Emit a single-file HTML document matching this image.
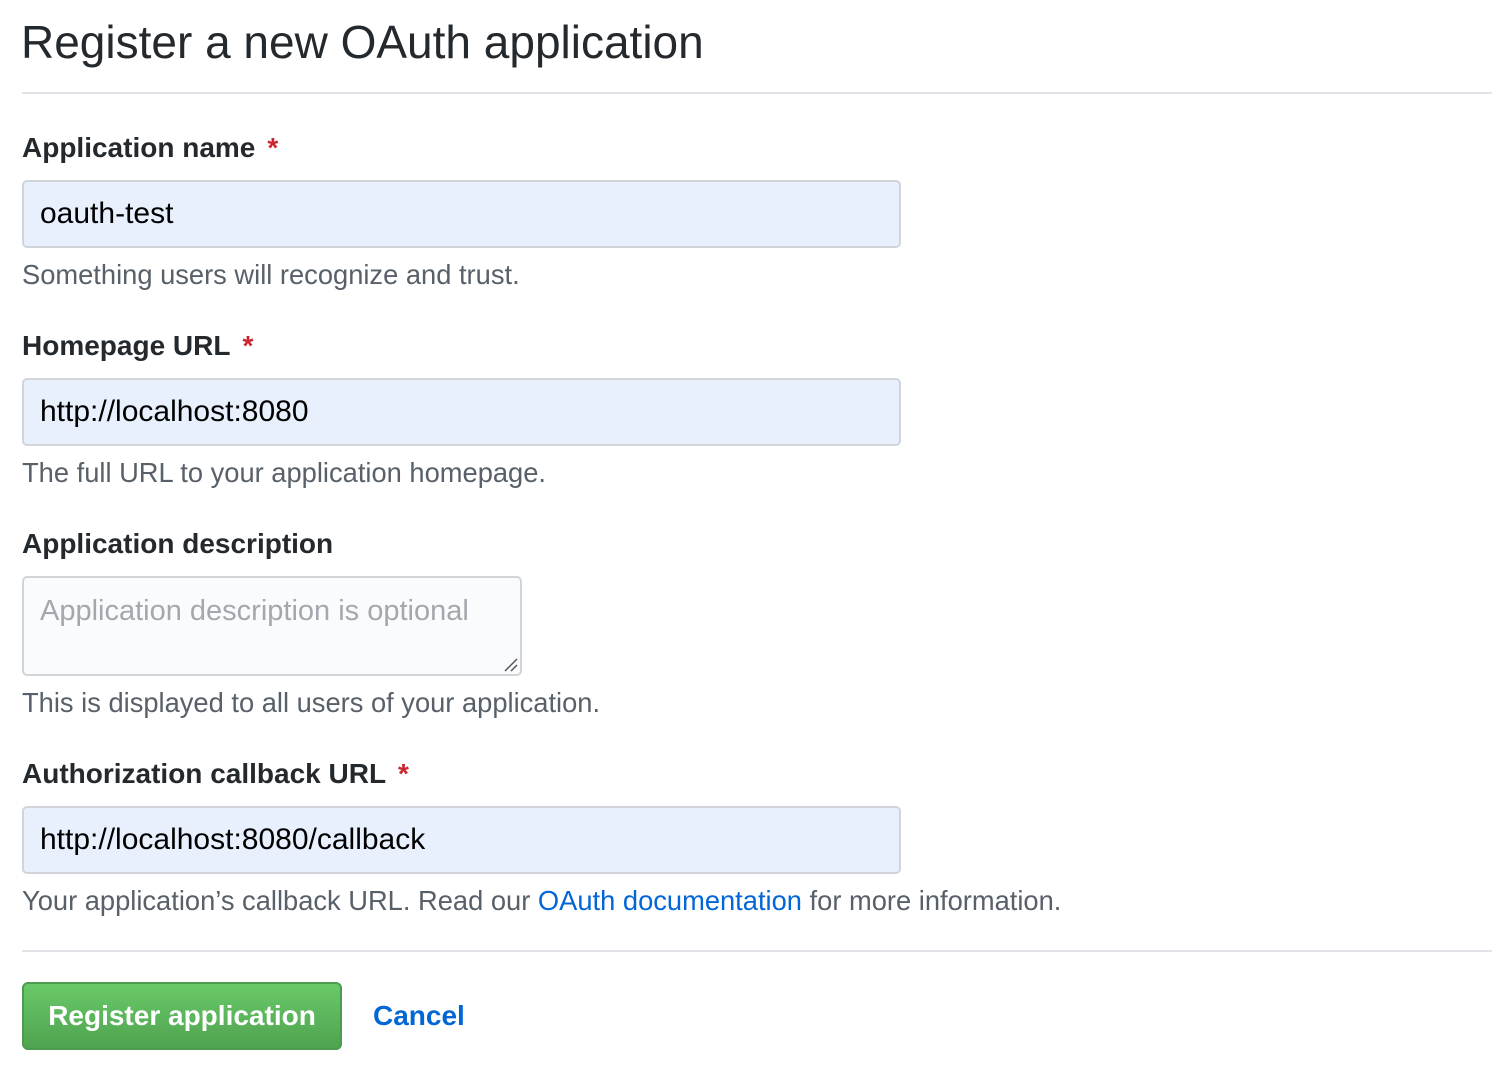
<!DOCTYPE html>
<html><head><meta charset="utf-8"><style>
body{margin:0;width:1512px;height:1068px;background:#fff;font-family:"Liberation Sans",Helvetica,Arial,sans-serif;color:#24292e;position:relative;overflow:hidden}
.a{position:absolute;white-space:nowrap}
.t{left:21px;top:14px;font-size:46px;line-height:56px}
.hr{left:22px;width:1470px;height:2px;background:#e1e4e8}
.l{left:22px;font-size:28px;font-weight:bold;line-height:34px}
.l b{color:#cb2431;margin-left:12px}
.i{left:22px;height:64px;border:2px solid #d1d5da;border-radius:5px;background:#e8f0fe;box-sizing:content-box;font-size:30px;line-height:64px;padding-left:16px;width:859px;color:#000}
.h{left:22px;font-size:27.3px;line-height:32px;color:#586069}
.h span{color:#0366d6}
</style></head><body>
<div class="a t">Register a new OAuth application</div>
<div class="a hr" style="top:92px"></div>
<div class="a l" style="top:131px">Application name<b>*</b></div>
<div class="a i" style="top:180px">oauth-test</div>
<div class="a h" style="top:259px">Something users will recognize and trust.</div>
<div class="a l" style="top:329px">Homepage URL<b>*</b></div>
<div class="a i" style="top:378px">http://localhost:8080</div>
<div class="a h" style="top:457px">The full URL to your application homepage.</div>
<div class="a l" style="top:527px">Application description</div>
<div class="a" style="left:22px;top:576px;height:96px;border:2px solid #d1d5da;border-radius:5px;background:#fafbfc;font-size:29px;color:#a3a8ae;line-height:66px;padding-left:16px;width:480px">Application description is optional
<svg style="position:absolute;right:2px;bottom:2px" width="14" height="14" viewBox="0 0 14 14"><path d="M13 1L1 13M13 7L7 13" stroke="#555" stroke-width="1.5"/></svg></div>
<div class="a h" style="top:687px">This is displayed to all users of your application.</div>
<div class="a l" style="top:757px">Authorization callback URL<b>*</b></div>
<div class="a i" style="top:806px">http://localhost:8080/callback</div>
<div class="a h" style="top:885px">Your application’s callback URL. Read our <span>OAuth documentation</span> for more information.</div>
<div class="a hr" style="top:950px"></div>
<div class="a" style="left:22px;top:982px;width:316px;height:64px;border:2px solid #4b9c4e;border-radius:6px;background:linear-gradient(#69c969,#4fa34f);color:#fff;font-weight:bold;font-size:28px;line-height:64px;text-align:center">Register application</div>
<div class="a" style="left:373px;top:999px;font-size:28px;font-weight:bold;color:#0366d6;line-height:34px">Cancel</div>
</body></html>
